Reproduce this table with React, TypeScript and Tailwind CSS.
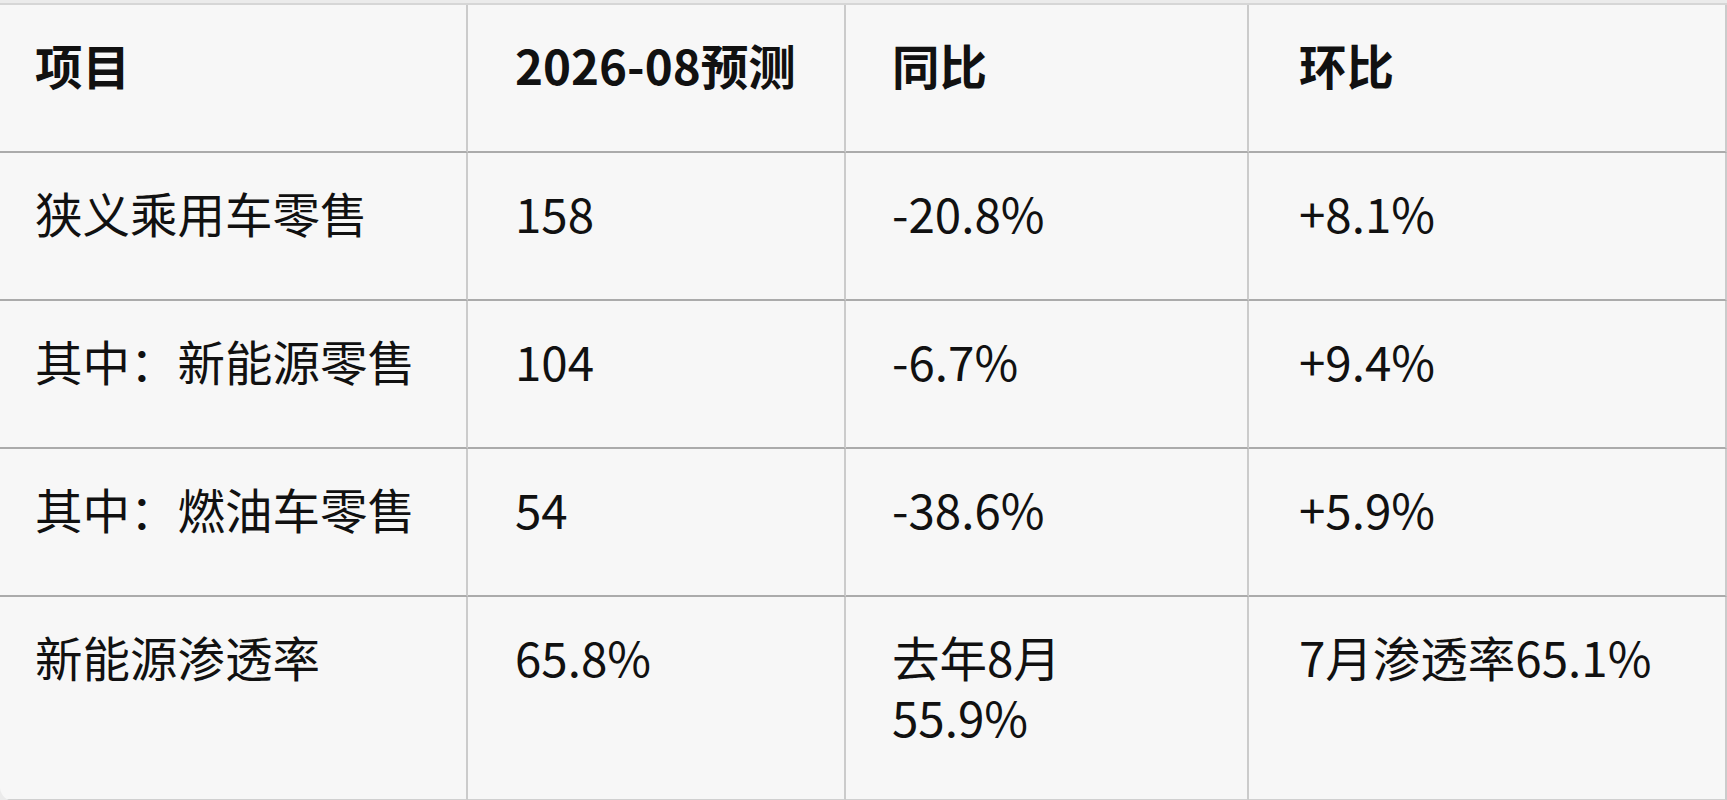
import React from 'react';

type Row = {
  name: string;
  value: string;
  yoy: React.ReactNode;
  mom: string;
};

const rows: Row[] = [
  { name: '狭义乘用车零售', value: '158', yoy: '-20.8%', mom: '+8.1%' },
  { name: '其中：新能源零售', value: '104', yoy: '-6.7%', mom: '+9.4%' },
  { name: '其中：燃油车零售', value: '54', yoy: '-38.6%', mom: '+5.9%' },
];

const cell = 'border-r-2 border-b-2 border-r-[#cbcbcb] border-b-[#ababab] pt-[30px]';

const App: React.FC = () => {
  return (
    <div
      className="h-[800px] overflow-hidden bg-[#ebebeb] pt-[3px] text-[47.5px] leading-[60px] text-[#111111]"
      style={{ fontFamily: '"Noto Sans CJK SC", "Noto Sans", sans-serif' }}
    >
      <div className="grid grid-cols-[468px_378px_403px_1fr] border-t-2 border-[#d6d6d6] bg-[#f7f7f7] rounded-bl-[14px] overflow-hidden">
        {/* header */}
        <div className={`${cell} h-[148px] pl-[35px] font-bold`}>项目</div>
        <div className={`${cell} h-[148px] pl-[47px] font-bold`}>2026-08预测</div>
        <div className={`${cell} h-[148px] pl-[46px] font-bold`}>同比</div>
        <div className={`${cell} h-[148px] pl-[50px] font-bold border-r-0`}>环比</div>

        {rows.map((r) => (
          <React.Fragment key={r.name}>
            <div className={`${cell} h-[148px] pl-[35px]`}>{r.name}</div>
            <div className={`${cell} h-[148px] pl-[47px]`}>{r.value}</div>
            <div className={`${cell} h-[148px] pl-[46px]`}>{r.yoy}</div>
            <div className={`${cell} h-[148px] pl-[50px] border-r-0`}>{r.mom}</div>
          </React.Fragment>
        ))}

        {/* last row */}
        <div className={`${cell} h-[204px] pl-[35px] border-b-[#d0d0d0]`}>新能源渗透率</div>
        <div className={`${cell} h-[204px] pl-[47px] border-b-[#d0d0d0]`}>65.8%</div>
        <div className={`${cell} h-[204px] pl-[46px] border-b-[#d0d0d0]`}>
          去年8月
          <br />
          55.9%
        </div>
        <div className={`${cell} h-[204px] pl-[50px] border-r-0 border-b-[#d0d0d0]`}>7月渗透率65.1%</div>
      </div>
    </div>
  );
};

export default App;
